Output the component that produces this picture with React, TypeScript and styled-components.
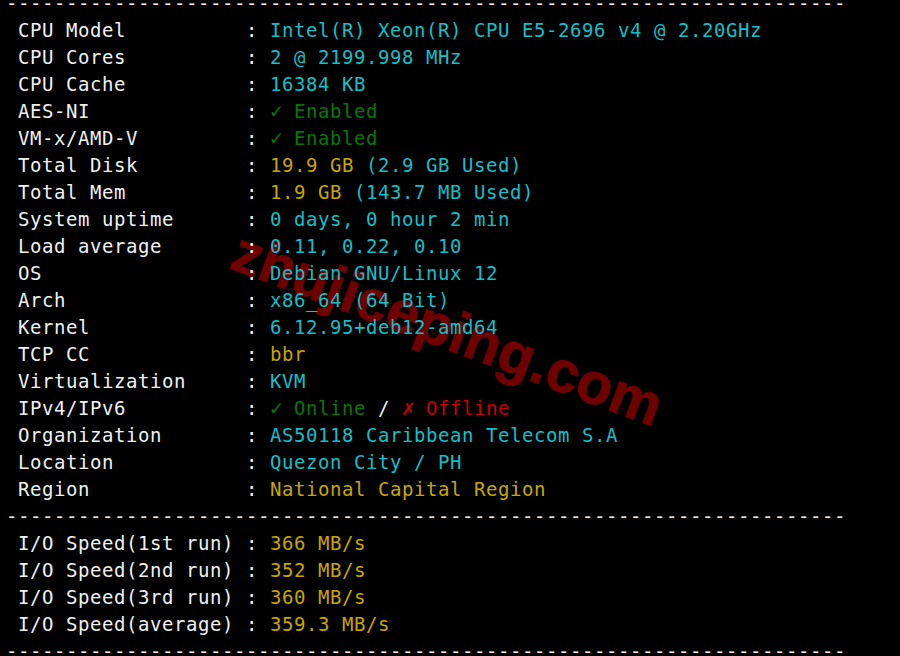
import React from "react";
import styled, { createGlobalStyle } from "styled-components";

const Global = createGlobalStyle`
  html, body {
    margin: 0;
    padding: 0;
    background: #000;
    overflow: hidden;
  }
  body {
    width: 900px;
    height: 656px;
  }
`;

type Tone = "white" | "cyan" | "yellow" | "green" | "red";

const palette: Record<Tone, string> = {
  white: "#f0f0f0",
  cyan: "#14bfc8",
  yellow: "#c8a600",
  green: "#077607",
  red: "#c80000",
};

const Screen = styled.div`
  position: relative;
  width: 900px;
  height: 656px;
  background: #000;
  overflow: hidden;
`;

const Watermark = styled.div`
  position: absolute;
  left: 448px;
  top: 328px;
  transform: translate(-50%, -50%) rotate(20.5deg);
  font-family: "Liberation Sans", Arial, sans-serif;
  font-weight: 700;
  font-size: 58px;
  color: #6e0000;
  white-space: nowrap;
  z-index: 0;
  -webkit-text-stroke: 1px #6e0000;
`;

const Output = styled.div`
  position: relative;
  z-index: 1;
  margin-top: -10px;
  padding-left: 6px;
  display: flex;
  flex-direction: column;
  font-family: "DejaVu Sans Mono", "Liberation Mono", monospace;
  font-size: 19px;
  letter-spacing: 0.56px;
  line-height: 27px;
  color: ${palette.white};
`;

const Line = styled.div`
  height: 27px;
  white-space: pre;
`;

const Part = styled.span<{ $tone: Tone }>`
  color: ${(p) => palette[p.$tone]};
`;

const Glyph = styled.span<{ $tone: Tone }>`
  display: inline-block;
  width: 12px;
  text-align: center;
  font-size: 21px;
  letter-spacing: 0;
  line-height: 27px;
  vertical-align: top;
  color: ${(p) => palette[p.$tone]};
`;

type Seg = { t: string; c: Tone; g?: boolean };

const DASHES = "-".repeat(70);

const Row = ({ label, segs }: { label: string; segs: Seg[] }) => (
  <Line>
    {" " + label.padEnd(18, " ") + " : "}
    {segs.map((s, i) =>
      s.g ? (
        <Glyph key={i} $tone={s.c}>
          {s.t}
        </Glyph>
      ) : (
        <Part key={i} $tone={s.c}>
          {s.t}
        </Part>
      )
    )}
  </Line>
);

const info: { label: string; segs: Seg[] }[] = [
  { label: "CPU Model", segs: [{ t: "Intel(R) Xeon(R) CPU E5-2696 v4 @ 2.20GHz", c: "cyan" }] },
  { label: "CPU Cores", segs: [{ t: "2 @ 2199.998 MHz", c: "cyan" }] },
  { label: "CPU Cache", segs: [{ t: "16384 KB", c: "cyan" }] },
  { label: "AES-NI", segs: [{ t: "✓", c: "green", g: true }, { t: " Enabled", c: "green" }] },
  { label: "VM-x/AMD-V", segs: [{ t: "✓", c: "green", g: true }, { t: " Enabled", c: "green" }] },
  { label: "Total Disk", segs: [{ t: "19.9 GB", c: "yellow" }, { t: " ", c: "white" }, { t: "(2.9 GB Used)", c: "cyan" }] },
  { label: "Total Mem", segs: [{ t: "1.9 GB", c: "yellow" }, { t: " ", c: "white" }, { t: "(143.7 MB Used)", c: "cyan" }] },
  { label: "System uptime", segs: [{ t: "0 days, 0 hour 2 min", c: "cyan" }] },
  { label: "Load average", segs: [{ t: "0.11, 0.22, 0.10", c: "cyan" }] },
  { label: "OS", segs: [{ t: "Debian GNU/Linux 12", c: "cyan" }] },
  { label: "Arch", segs: [{ t: "x86_64 (64 Bit)", c: "cyan" }] },
  { label: "Kernel", segs: [{ t: "6.12.95+deb12-amd64", c: "cyan" }] },
  { label: "TCP CC", segs: [{ t: "bbr", c: "yellow" }] },
  { label: "Virtualization", segs: [{ t: "KVM", c: "cyan" }] },
  {
    label: "IPv4/IPv6",
    segs: [
      { t: "✓", c: "green", g: true },
      { t: " Online", c: "green" },
      { t: " / ", c: "white" },
      { t: "✗", c: "red", g: true },
      { t: " Offline", c: "red" },
    ],
  },
  { label: "Organization", segs: [{ t: "AS50118 Caribbean Telecom S.A", c: "cyan" }] },
  { label: "Location", segs: [{ t: "Quezon City / PH", c: "cyan" }] },
  { label: "Region", segs: [{ t: "National Capital Region", c: "yellow" }] },
];

const io: { label: string; value: string }[] = [
  { label: "I/O Speed(1st run)", value: "366 MB/s" },
  { label: "I/O Speed(2nd run)", value: "352 MB/s" },
  { label: "I/O Speed(3rd run)", value: "360 MB/s" },
  { label: "I/O Speed(average)", value: "359.3 MB/s" },
];

export default function App() {
  return (
    <>
      <Global />
      <Screen>
        <Watermark>zhujiceping.com</Watermark>
        <Output>
          <Line>{DASHES}</Line>
          {info.map((r) => (
            <Row key={r.label} label={r.label} segs={r.segs} />
          ))}
          <Line>{DASHES}</Line>
          {io.map((r) => (
            <Row key={r.label} label={r.label} segs={[{ t: r.value, c: "yellow" }]} />
          ))}
          <Line>{DASHES}</Line>
        </Output>
      </Screen>
    </>
  );
}
